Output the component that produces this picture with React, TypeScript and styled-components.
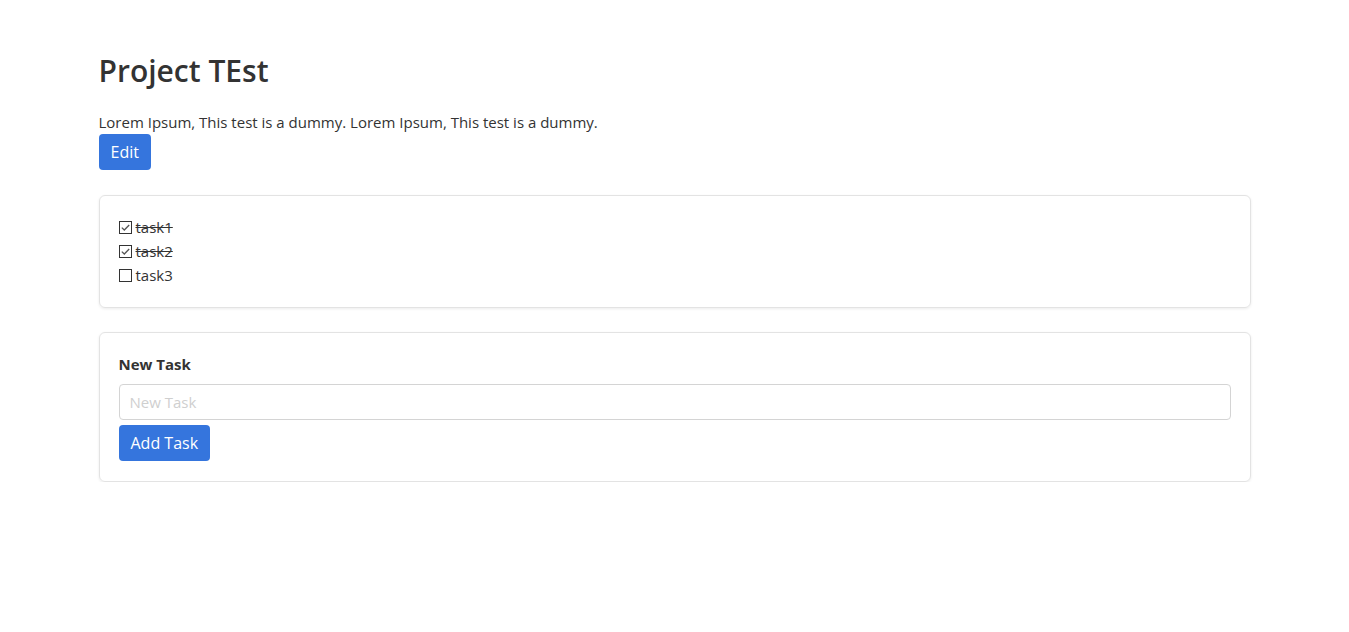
import React from "react";
import styled, { createGlobalStyle } from "styled-components";

const Global = createGlobalStyle`
  html, body { margin: 0; padding: 0; background: #fff; }
  body {
    font-family: "Open Sans", "Noto Sans", "Liberation Sans", sans-serif;
    font-size: 15px;
    line-height: 24px;
    color: #333;
  }
  * { box-sizing: border-box; }
`;

const Page = styled.main`
  max-width: 1152px;
  margin: 0 auto;
  padding-top: 52px;
`;

const Title = styled.h1`
  margin: 0 0 20px;
  font-size: 30px;
  line-height: 38px;
  font-weight: 600;
  color: #333;
`;

const Description = styled.p`
  margin: 0;
`;

const Button = styled.button`
  display: inline-block;
  height: 36px;
  padding: 0 12px;
  border: none;
  border-radius: 4px;
  background: #3575dd;
  color: #fff;
  font: inherit;
  font-size: 16px;
  cursor: pointer;
`;

const Card = styled.section<{ $gap: number }>`
  margin-top: ${(p) => p.$gap}px;
  padding: 19px 19px 20px;
  border: 1px solid #e3e3e3;
  border-radius: 6px;
  box-shadow: 0 1px 3px rgba(0, 0, 0, 0.08);
`;

const TaskList = styled.ul`
  list-style: none;
  margin: 0;
  padding: 0;
`;

const TaskRow = styled.li<{ $done: boolean }>`
  display: flex;
  align-items: center;
  height: 24px;
  text-decoration: ${(p) => (p.$done ? "line-through" : "none")};
`;

const Box = styled.span`
  display: inline-flex;
  width: 13px;
  height: 13px;
  border: 1px solid #333;
  background: #fff;
  align-items: center;
  justify-content: center;
  flex: none;
`;

const TaskText = styled.span`
  padding-left: 4px;
`;

const Label = styled.label`
  display: block;
  font-weight: 700;
  margin-bottom: 8px;
`;

const Input = styled.input`
  display: block;
  width: 100%;
  height: 36px;
  padding: 0 10px;
  border: 1px solid #d4d4d4;
  border-radius: 4px;
  font: inherit;
  color: #333;
  margin-bottom: 5px;
  &::placeholder { color: #cfcfcf; }
`;

const tasks = [
  { name: "task1", done: true },
  { name: "task2", done: true },
  { name: "task3", done: false },
];

export default function App() {
  return (
    <>
      <Global />
      <Page>
        <Title>Project TEst</Title>
        <Description>
          Lorem Ipsum, This test is a dummy. Lorem Ipsum, This test is a dummy.
        </Description>
        <Button>Edit</Button>
        <Card $gap={25}>
          <TaskList>
            {tasks.map((t) => (
              <TaskRow key={t.name} $done={t.done}>
                <Box>
                  {t.done && (
                    <svg width="11" height="11" viewBox="0 0 11 11">
                      <path d="M1.8 5.6 L4.3 8 L9.2 3" fill="none" stroke="#555" strokeWidth="1.3" />
                    </svg>
                  )}
                </Box>
                <TaskText>{t.name}</TaskText>
              </TaskRow>
            ))}
          </TaskList>
        </Card>
        <Card $gap={24}>
          <Label htmlFor="newtask">New Task</Label>
          <Input id="newtask" placeholder="New Task" />
          <Button>Add Task</Button>
        </Card>
      </Page>
    </>
  );
}
